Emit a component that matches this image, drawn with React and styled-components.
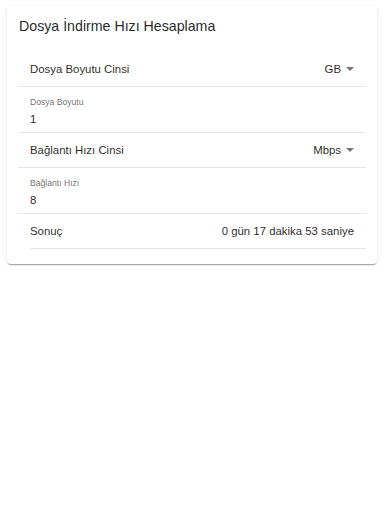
import React from 'react'
import styled, { createGlobalStyle } from 'styled-components'

const GlobalStyle = createGlobalStyle`
  body {
    margin: 0;
    background: #ffffff;
    font-family: "Liberation Sans", Arial, sans-serif;
    color: rgba(0, 0, 0, 0.87);
  }
`

const Card = styled.div`
  margin: 6px 7px;
  padding: 10px 11px 15px 11px;
  background: #ffffff;
  border-radius: 4px;
  box-shadow: 0 2px 1px -1px rgba(0, 0, 0, 0.2), 0 1px 1px 0 rgba(0, 0, 0, 0.14), 0 1px 3px 0 rgba(0, 0, 0, 0.12);
`

const Title = styled.h1`
  margin: 0 0 16px 0;
  padding: 0 1px;
  font-size: 14.2px;
  line-height: 20px;
  font-weight: 400;
`

const List = styled.div`
  display: flex;
  flex-direction: column;
`

const Row = styled.div`
  display: flex;
  align-items: center;
  justify-content: space-between;
  height: 34px;
  padding: 0 12px;
  margin-left: ${p => (p.$inset ? '12px' : '0')};
  padding-left: ${p => (p.$inset ? '0' : '12px')};
  border-bottom: 1px solid #e6e6e6;
  font-size: 11.4px;
`

const Select = styled.div`
  display: flex;
  align-items: center;
  gap: 5px;
`

const Field = styled.div`
  display: flex;
  flex-direction: column;
  height: 46px;
  padding: 9px 12px 0 12px;
  box-sizing: border-box;
  border-bottom: 1px solid #e6e6e6;
`

const Label = styled.span`
  font-size: 8.6px;
  line-height: 12px;
  color: rgba(0, 0, 0, 0.6);
`

const Value = styled.span`
  margin-top: 3px;
  font-size: 11.4px;
  line-height: 16px;
`

function Arrow() {
  return (
    <svg width="8" height="4" viewBox="0 0 10 5">
      <path d="M0 0l5 5 5-5z" fill="rgba(0,0,0,0.54)" />
    </svg>
  )
}

export default function App() {
  return (
    <>
      <GlobalStyle />
      <Card>
        <Title>Dosya İndirme Hızı Hesaplama</Title>
        <List>
          <Row>
            <span>Dosya Boyutu Cinsi</span>
            <Select>GB <Arrow /></Select>
          </Row>
          <Field>
            <Label>Dosya Boyutu</Label>
            <Value>1</Value>
          </Field>
          <Row>
            <span>Bağlantı Hızı Cinsi</span>
            <Select>Mbps <Arrow /></Select>
          </Row>
          <Field>
            <Label>Bağlantı Hızı</Label>
            <Value>8</Value>
          </Field>
          <Row $inset>
            <span>Sonuç</span>
            <span>0 gün 17 dakika 53 saniye</span>
          </Row>
        </List>
      </Card>
    </>
  )
}
